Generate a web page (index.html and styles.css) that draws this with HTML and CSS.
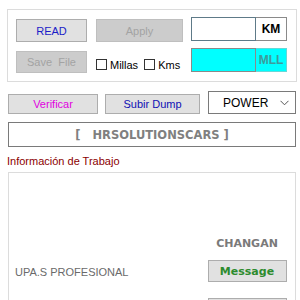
FILE: index.html
```html
<html>
  <head>
    <title>HRSolutionsCars</title>
    <link rel="stylesheet" href="styles.css">
  </head>
  <body>
    <div class="form">
      <div class="group">
        <button class="btn read">READ</button>
        <button class="btn off">Apply</button>
        <div class="unit">
          <span class="field"></span>
          <span class="tag">KM</span>
        </div>
        <button class="btn off save">Save&nbsp; File</button>
        <div class="checks">
          <label class="check"><span class="box"></span>Millas</label>
          <label class="check"><span class="box"></span>Kms</label>
        </div>
        <div class="unit cyan">
          <span class="field"></span>
          <span class="tag">MLL</span>
        </div>
      </div>

      <div class="actions">
        <button class="btn verify">Verificar</button>
        <button class="btn dump">Subir Dump</button>
        <div class="select">
          <span>POWER</span>
          <svg width="9" height="6" viewBox="0 0 9 6">
            <path d="M0.5 0.8 L4.5 4.8 L8.5 0.8" fill="none" stroke="#555" stroke-width="1"/>
          </svg>
        </div>
      </div>

      <div class="banner">[&nbsp;&nbsp; HRSOLUTIONSCARS ]</div>

      <div class="info-label">Información de Trabajo</div>
      <div class="info">
        <span class="model">UPA.S PROFESIONAL</span>
        <div class="side">
          <span class="brand">CHANGAN</span>
          <button class="btn msg">Message</button>
          <button class="btn help">HELP</button>
        </div>
      </div>
    </div>
  </body>
</html>
```

FILE: styles.css
```css
body {
  margin: 0;
  background: #ffffff;
  font-family: "Liberation Sans", Arial, sans-serif;
  font-size: 11px;
  color: #000000;
  overflow: hidden;
}

.form {
  width: 300px;
  height: 300px;
}

.group {
  box-sizing: border-box;
  margin: 9px 0 0 7px;
  width: 290px;
  height: 73px;
  border: 1px solid #dcdcdc;
  padding: 8px 0 0 8px;
  display: grid;
  grid-template-columns: 72px 87px 96px;
  grid-template-rows: 24px 24px;
  column-gap: 8px;
  row-gap: 8px;
}

.btn {
  box-sizing: border-box;
  font-family: "Liberation Sans", Arial, sans-serif;
  font-size: 11px;
  background: #e1e1e1;
  border: 1px solid #adadad;
  padding: 0;
  margin: 0;
  color: #000000;
}

.read {
  width: 71px;
  height: 23px;
  margin-top: 1px;
  color: #1c1cc8;
}

.off {
  background: #cccccc;
  border-color: #bfbfbf;
  color: #a3a3a3;
  height: 23px;
  margin-top: 1px;
}

.save {
  width: 71px;
  height: 22px;
  margin-top: 1px;
}

.unit {
  display: flex;
  margin-top: -1px;
  height: 24px;
}

.field {
  box-sizing: border-box;
  width: 65px;
  border: 1px solid #5e7a88;
  background: #ffffff;
}

.tag {
  box-sizing: border-box;
  width: 31px;
  border: 1px solid #8a8a8a;
  border-left: none;
  font-weight: bold;
  font-size: 12px;
  display: flex;
  align-items: center;
  justify-content: center;
}

.cyan {
  margin-top: -2px;
}

.cyan .field {
  background: #00ffff;
  border-color: #8a8a8a;
}

.cyan .tag {
  background: #00ffff;
  border: 1px solid #66d8d8;
  border-left: none;
  color: #3c9c9c;
}

.checks {
  display: flex;
  align-items: center;
  gap: 6px;
  padding-top: 5px;
}

.check {
  display: flex;
  align-items: center;
  gap: 3px;
}

.box {
  box-sizing: border-box;
  width: 11px;
  height: 11px;
  border: 1px solid #333333;
  background: #ffffff;
}

.actions {
  display: flex;
  align-items: flex-end;
  margin: 9px 0 0 8px;
  height: 23px;
}

.verify {
  width: 90px;
  height: 20px;
  color: #e000e0;
}

.dump {
  width: 95px;
  height: 20px;
  margin-left: 7px;
  color: #1010b4;
}

.select {
  box-sizing: border-box;
  width: 88px;
  height: 23px;
  margin-left: 8px;
  border: 1px solid #7a7a7a;
  display: flex;
  align-items: center;
  justify-content: space-between;
  padding: 0 6px 0 14px;
  font-size: 12px;
}

.banner {
  box-sizing: border-box;
  margin: 8px 0 0 8px;
  width: 288px;
  height: 25px;
  border: 1px solid #7a7a7a;
  display: flex;
  align-items: center;
  justify-content: center;
  font-family: "DejaVu Sans", Tahoma, sans-serif;
  font-weight: bold;
  font-size: 11.5px;
  color: #808080;
}

.info-label {
  margin: 7px 0 0 7px;
  font-size: 11px;
  line-height: 14px;
  color: #8b0000;
}

.info {
  box-sizing: border-box;
  margin: 4px 0 0 8px;
  width: 288px;
  height: 160px;
  border: 1px solid #dcdcdc;
  display: flex;
  justify-content: space-between;
}

.model {
  padding: 93px 0 0 6px;
  font-size: 11px;
  color: #6a6a6a;
}

.side {
  width: 80px;
  margin-right: 8px;
  display: flex;
  flex-direction: column;
  align-items: center;
  padding-top: 64px;
}

.brand {
  font-family: "DejaVu Sans", Tahoma, sans-serif;
  font-weight: bold;
  font-size: 11px;
  color: #7a7a7a;
}

.msg,
.help {
  width: 79px;
  height: 22px;
  font-family: "DejaVu Sans", Tahoma, sans-serif;
  font-weight: bold;
  font-size: 11px;
}

.msg {
  margin-top: 10px;
  color: #2e8b2e;
}

.help {
  margin-top: 16px;
}
```
